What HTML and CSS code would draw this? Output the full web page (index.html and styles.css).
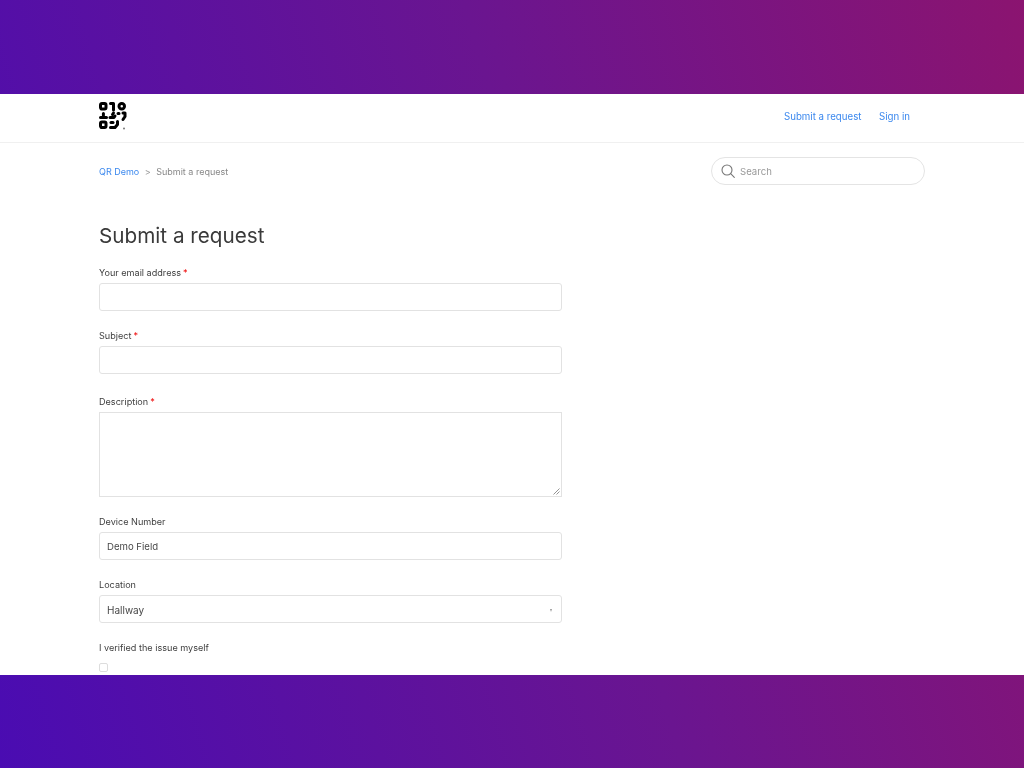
FILE: index.html
```html
<!DOCTYPE html>
<html lang="en">
<head>
<meta charset="utf-8">
<title>Submit a request</title>
<link rel="stylesheet" href="styles.css">
</head>
<body>
<div class="sheet">
  <header class="topbar">
    <svg class="logo" viewBox="0 0 28 28" width="28" height="28" aria-label="QR Demo logo">
      <g fill="none" stroke="#000" stroke-width="3">
        <rect x="1.5" y="1.5" width="5.5" height="5.5" rx="1.4"/>
        <rect x="20" y="1.5" width="5.5" height="5.5" rx="2.7"/>
        <rect x="1.5" y="20" width="5.5" height="5.5" rx="1.4"/>
      </g>
      <g fill="none" stroke="#000" stroke-width="3" stroke-linecap="round" stroke-linejoin="round">
        <path d="M11.5 1.6h3v6.5"/>
        <path d="M4.4 11.5v2M1.5 15.5h6"/>
        <path d="M11 15.5h4l1-1.5M14.5 11l-1 1.5"/>
        <path d="M19 11.5h1M24 11h2v3.5l-2 3"/>
        <path d="M11.5 25.5h4.5l2.5-3v-3"/>
        <path d="M12 20.5h2"/>
      </g>
      <circle cx="25" cy="26.6" r="1" fill="#777"/>
    </svg>
    <nav class="topnav">
      <a href="#">Submit a request</a>
      <a href="#">Sign in</a>
    </nav>
  </header>
  <main class="content">
    <div class="subnav">
      <ol class="crumbs">
        <li><a href="#">QR Demo</a></li>
        <li class="sep">&gt;</li>
        <li>Submit a request</li>
      </ol>
      <div class="search">
        <svg class="search-icon" viewBox="0 0 14 14" width="14" height="14">
          <circle cx="6" cy="6" r="5" fill="none" stroke="#777" stroke-width="1.1"/>
          <path d="M9.7 9.7 13.3 13.3" stroke="#777" stroke-width="1.1" stroke-linecap="round"/>
        </svg>
        <span class="search-text">Search</span>
      </div>
    </div>
    <h1 class="title">Submit a request</h1>
    <form class="form">
      <div class="field field-email">
        <label class="label">Your email address<span class="req">*</span></label>
        <div class="input"></div>
      </div>
      <div class="field field-subject">
        <label class="label">Subject<span class="req">*</span></label>
        <div class="input"></div>
      </div>
      <div class="field field-desc">
        <label class="label">Description<span class="req">*</span></label>
        <div class="input textarea">
          <svg class="grip" viewBox="0 0 7 7" width="7" height="7">
            <path d="M0.5 6.5 6.5 0.5M3.5 6.5 6.5 3.5" stroke="#888" stroke-width="0.9"/>
          </svg>
        </div>
      </div>
      <div class="field field-device">
        <label class="label">Device Number</label>
        <div class="input">Demo Field</div>
      </div>
      <div class="field field-location">
        <label class="label">Location</label>
        <div class="input select">Hallway<span class="caret"></span></div>
      </div>
      <div class="field field-check">
        <label class="label">I verified the issue myself</label>
        <span class="checkbox"></span>
      </div>
    </form>
  </main>
</div>
</body>
</html>
```
FILE: styles.css
```css
html, body {
  margin: 0;
  height: 768px;
  overflow: hidden;
}
body {
  background: linear-gradient(74deg, #4a0cb2 0%, #6a1590 55%, #8b1470 100%);
  padding: 94px 0 93px;
  box-sizing: border-box;
  font-family: Inter, "Liberation Sans", sans-serif;
  color: #333;
}
.sheet {
  background: #fff;
  height: 581px;
  overflow: hidden;
  filter: blur(0.25px);
}
.topbar {
  height: 49px;
  box-sizing: border-box;
  border-bottom: 1px solid #f0f0f0;
  padding: 8px 114px 0 99px;
  display: flex;
  justify-content: space-between;
  align-items: flex-start;
}
.logo { display: block; }
.topnav {
  display: flex;
  gap: 17.5px;
  padding-top: 8px;
  font-size: 9.7px;
  line-height: 14px;
}
a { color: #3b88ee; text-decoration: none; }
.content { padding: 0 99px; }
.subnav {
  display: flex;
  justify-content: space-between;
  align-items: center;
  height: 28px;
  margin-top: 14px;
}
.crumbs {
  list-style: none;
  margin: 0;
  padding: 1px 0 0;
  display: flex;
  gap: 5.5px;
  font-size: 9px;
  color: #888;
}
.sep { color: #999; }
.search {
  width: 214px;
  height: 28px;
  box-sizing: border-box;
  border: 1px solid #e4e4e4;
  border-radius: 14px;
  display: flex;
  align-items: center;
  padding-left: 9px;
  gap: 5px;
}
.search-icon { display: block; }
.search-text { font-size: 9.6px; color: #999; }
.title {
  margin: 35px 0 0;
  font-size: 20.7px;
  line-height: 32px;
  font-weight: 400;
  color: #3a3a3a;
}
.form {
  width: 463px;
  display: flex;
  flex-direction: column;
}
.field { display: flex; flex-direction: column; }
.field-email { margin-top: 14px; }
.field-subject { margin-top: 18px; }
.field-desc { margin-top: 21px; }
.field-device { margin-top: 18px; }
.field-location { margin-top: 18px; }
.field-check { margin-top: 18px; }
.label {
  font-size: 9.1px;
  line-height: 14px;
  height: 14px;
  margin-bottom: 3px;
  color: #3f3f3f;
}
.req { color: #e00; margin-left: 2px; }
.input {
  height: 28px;
  box-sizing: border-box;
  border: 1px solid #e2e2e2;
  border-radius: 3px;
  padding: 0 7px;
  font-size: 9.6px;
  line-height: 27px;
  color: #484848;
  position: relative;
}
.textarea {
  height: 85px;
  border-radius: 0;
}
.grip { position: absolute; right: 1px; bottom: 1px; }
.select { line-height: 29px; font-size: 10px; }
.caret {
  position: absolute;
  right: 9px;
  top: 13px;
  border-left: 1.5px solid transparent;
  border-right: 1.5px solid transparent;
  border-top: 3px solid #999;
}
.checkbox {
  display: block;
  width: 9px;
  height: 9px;
  box-sizing: border-box;
  border: 1px solid #ddd;
  border-radius: 2px;
  margin-top: 5px;
}
```
